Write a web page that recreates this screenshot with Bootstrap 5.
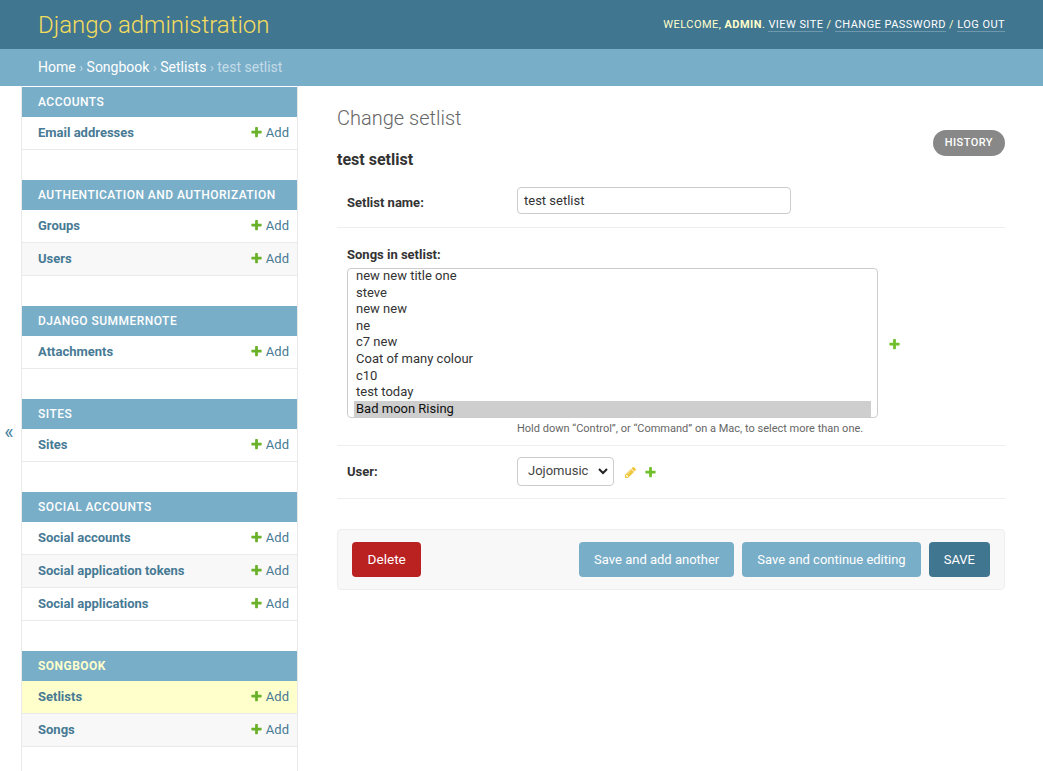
<!DOCTYPE html>
<html lang="en">
<head>
    <meta charset="UTF-8">
    <meta name="viewport" content="width=device-width, initial-scale=1.0">
    <title>Change setlist | Django site admin</title>
    <link href="https://cdn.jsdelivr.net/npm/bootstrap@5.3.0/dist/css/bootstrap.min.css" rel="stylesheet">
    <style>
        html, body {
            height: 100%;
            overflow: hidden;
        }
        body {
            font-family: Roboto, "Liberation Sans", sans-serif;
            font-size: 13px;
            color: #333;
            background: #fff;
        }
        a {
            text-decoration: none;
        }
        .site-header {
            height: 49px;
            padding: 2px 38px 0;
            background: #417690;
            color: #ffc;
        }
        .site-title {
            margin: 0;
            font-size: 24px;
            font-weight: 300;
            color: #f5dd5d;
        }
        .user-tools {
            font-size: 11px;
            letter-spacing: .45px;
            text-transform: uppercase;
        }
        .user-tools strong {
            font-weight: 700;
        }
        .user-tools a {
            color: #fff;
            border-bottom: 1px solid rgba(255, 255, 255, .25);
        }
        .crumbs {
            height: 37px;
            padding: 0 38px;
            background: #79aec8;
            color: #c4dce8;
            font-size: 14px;
        }
        .crumbs a {
            color: #fff;
        }
        .crumbs .sep {
            font-size: 13px;
        }
        .page-body {
            height: 685px;
        }
        .side-toggle {
            width: 22px;
            flex: none;
            padding-top: 7px;
            padding-right: 3px;
            font-size: 20px;
            color: #447e9b;
            border-right: 1px solid #eaeaea;
        }
        .side-nav {
            width: 276px;
            flex: none;
            padding-top: 1px;
            border-right: 1px solid #eaeaea;
        }
        .app-group {
            margin-bottom: 30px;
        }
        .app-caption {
            height: 30px;
            padding: 0 16px;
            background: #79aec8;
            color: #fff;
            font-size: 12px;
            font-weight: 500;
            letter-spacing: .46px;
            text-transform: uppercase;
        }
        .app-caption.is-current {
            color: #ffc;
            font-weight: 700;
        }
        .model-row {
            height: 33px;
            padding: 0 8px 0 16px;
            border-bottom: 1px solid #eaeaea;
        }
        .model-row:nth-child(even) {
            background: #f8f8f8;
        }
        .model-row.is-current {
            background: #ffc;
        }
        .model-name {
            color: #477a94;
            font-weight: 700;
        }
        .add-link {
            color: #477a94;
        }
        .plus-icon {
            width: 13px;
            height: 13px;
            fill: #6ab12a;
            vertical-align: -2px;
        }
        .form-plus {
            fill: #70bf2b;
        }
        .pencil-icon {
            width: 13px;
            height: 13px;
            fill: #efc63c;
        }
        .main-col {
            padding: 20px 38px 0 39px;
            min-width: 0;
        }
        .page-title {
            margin: 0;
            font-size: 20px;
            font-weight: 300;
            color: #666;
            line-height: 24px;
        }
        .object-name {
            margin: 20px 0 0;
            font-size: 16px;
            font-weight: 700;
            color: #333;
            line-height: 20px;
        }
        .history-btn {
            position: absolute;
            top: 44px;
            right: 38px;
            height: 26px;
            padding: 0 12px;
            border-radius: 15px;
            background: #888;
            color: #fff;
            font-size: 11px;
            font-weight: 500;
            letter-spacing: .45px;
            line-height: 26px;
            text-transform: uppercase;
        }
        .form-line {
            padding: 0 0 0 10px;
            border-bottom: 1px solid #eee;
        }
        .line-name {
            height: 54px;
            margin-top: 4px;
        }
        .field-label {
            width: 170px;
            flex: none;
            font-weight: 700;
            margin: 0;
        }
        .line-name .field-label {
            padding-top: 4px;
        }
        .songs-label.field-label {
            display: block;
            margin-bottom: 3px;
        }
        .name-input.form-control {
            width: 274px;
            height: 27px;
            padding: 2px 6px;
            font-size: 13px;
            color: #333;
            border: 1px solid #ccc;
            border-radius: 4px;
        }
        .line-songs {
            height: 218px;
            padding-top: 17px;
        }
        .songs-list {
            width: 531px;
            height: 150px;
            padding: 6px 6px 0;
            overflow: hidden;
            font-family: inherit;
            font-size: 13px;
            color: #333;
            border: 1px solid #ccc;
            border-radius: 4px;
            outline: 0;
        }
        .songs-list option {
            height: 16.6px;
            min-height: 16.6px;
            padding: 0 2px;
            line-height: 16.6px;
        }
        .songs-list option:checked {
            background: #cecece linear-gradient(#cecece, #cecece);
        }
        .songs-add {
            margin: 4px 0 0 10px;
        }
        .help-note {
            margin: 3px 0 0 170px;
            font-size: 11px;
            color: #666;
        }
        .line-user {
            height: 53px;
        }
        .user-select.form-select {
            width: 97px;
            height: 29px;
            margin-bottom: 2px;
            padding: 0 0 0 10px;
            font-size: 13px;
            color: #444;
            border: 1px solid #ccc;
            border-radius: 4px;
            background-image: url("data:image/svg+xml,%3csvg xmlns='http://www.w3.org/2000/svg' viewBox='0 0 10 8'%3e%3cpath fill='none' stroke='%23222' stroke-width='2' d='M1 2l4 4 4-4'/%3e%3c/svg%3e");
            background-size: 10px 8px;
            background-position: right 5px center;
        }
        .pencil-link {
            margin-left: 10px;
        }
        .plus-link {
            margin-left: 7px;
        }
        .submit-bar {
            height: 61px;
            margin-top: 30px;
            padding: 0 14px;
            background: #f8f8f8;
            border: 1px solid #eee;
            border-radius: 4px;
        }
        .submit-bar .btn {
            height: 35px;
            padding: 0 15px;
            border: 0;
            border-radius: 4px;
            font-size: 13px;
            line-height: 35px;
            color: #fff;
        }
        .submit-bar .btn-delete {
            padding: 0 15.5px;
            background: #ba2121;
            font-size: 13.6px;
        }
        .btn-soft {
            background: #79aec8;
        }
        .btn-main {
            background: #417690;
        }
    </style>
</head>
<body>
    <header class="site-header d-flex align-items-center justify-content-between">
        <h1 class="site-title">Django administration</h1>
        <div class="user-tools">
            Welcome, <strong>admin</strong>.
            <a href="#">View site</a> /
            <a href="#">Change password</a> /
            <a href="#">Log out</a>
        </div>
    </header>
    <nav class="crumbs d-flex align-items-center">
        <span><a href="#">Home</a> <span class="sep">›</span> <a href="#">Songbook</a> <span class="sep">›</span> <a href="#">Setlists</a> <span class="sep">›</span> test setlist</span>
    </nav>

    <div class="page-body d-flex position-relative">
        <div class="side-toggle d-flex align-items-center justify-content-center">«</div>
        <aside class="side-nav" id="sideNav"></aside>

        <main class="main-col flex-grow-1">
            <h2 class="page-title">Change setlist</h2>
            <a class="history-btn" href="#">History</a>
            <h3 class="object-name">test setlist</h3>

            <div class="form-line line-name d-flex align-items-center">
                <label class="field-label" for="setlistName">Setlist name:</label>
                <input class="name-input form-control" id="setlistName" type="text" value="test setlist">
            </div>

            <div class="form-line line-songs">
                <label class="field-label songs-label" for="songsList">Songs in setlist:</label>
                <div class="d-flex align-items-center">
                    <select class="songs-list" id="songsList" multiple>
                        <option>first title</option>
                        <option>new new title one</option>
                        <option>steve</option>
                        <option>new new</option>
                        <option>ne</option>
                        <option>c7 new</option>
                        <option>Coat of many colour</option>
                        <option>c10</option>
                        <option>test today</option>
                        <option selected>Bad moon Rising</option>
                    </select>
                    <a class="songs-add d-flex" href="#"><svg class="plus-icon form-plus" viewBox="0 0 1792 1792"><path d="M1600 736v192q0 40-28 68t-68 28h-416v416q0 40-28 68t-68 28h-192q-40 0-68-28t-28-68v-416h-416q-40 0-68-28t-28-68v-192q0-40 28-68t68-28h416v-416q0-40 28-68t68-28h192q40 0 68 28t28 68v416h416q40 0 68 28t28 68z"/></svg></a>
                </div>
                <p class="help-note">Hold down “Control”, or “Command” on a Mac, to select more than one.</p>
            </div>

            <div class="form-line line-user d-flex align-items-center">
                <label class="field-label" for="userSelect">User:</label>
                <select class="user-select form-select" id="userSelect"><option>Jojomusic</option></select>
                <a class="pencil-link d-flex" href="#"><svg class="pencil-icon" viewBox="0 0 1792 1792"><path d="M491 1536l91-91-235-235-91 91v107h128v128h107zm523-928q0-22-22-22-10 0-17 7l-542 542q-7 7-7 17 0 22 22 22 10 0 17-7l542-542q7-7 7-17zm-54-192l416 416-832 832h-416v-416zm683 96q0 53-37 90l-166 166-416-416 166-165q36-38 90-38 53 0 91 38l235 234q37 39 37 91z"/></svg></a>
                <a class="plus-link d-flex" href="#"><svg class="plus-icon form-plus" viewBox="0 0 1792 1792"><path d="M1600 736v192q0 40-28 68t-68 28h-416v416q0 40-28 68t-68 28h-192q-40 0-68-28t-28-68v-416h-416q-40 0-68-28t-28-68v-192q0-40 28-68t68-28h416v-416q0-40 28-68t68-28h192q40 0 68 28t28 68v416h416q40 0 68 28t28 68z"/></svg></a>
            </div>

            <div class="submit-bar d-flex align-items-center gap-2">
                <a class="btn btn-delete me-auto" href="#">Delete</a>
                <button class="btn btn-soft" type="button">Save and add another</button>
                <button class="btn btn-soft" type="button">Save and continue editing</button>
                <button class="btn btn-main" type="button">SAVE</button>
            </div>
        </main>
    </div>

    <script src="https://cdn.jsdelivr.net/npm/bootstrap@5.3.0/dist/js/bootstrap.bundle.min.js"></script>
    <script>
        const plus = '<svg class="plus-icon" viewBox="0 0 1792 1792"><path d="M1600 736v192q0 40-28 68t-68 28h-416v416q0 40-28 68t-68 28h-192q-40 0-68-28t-28-68v-416h-416q-40 0-68-28t-28-68v-192q0-40 28-68t68-28h416v-416q0-40 28-68t68-28h192q40 0 68 28t28 68v416h416q40 0 68 28t28 68z"/></svg>';
        const groups = [
            ['Accounts', ['Email addresses']],
            ['Authentication and Authorization', ['Groups', 'Users']],
            ['Django Summernote', ['Attachments']],
            ['Sites', ['Sites']],
            ['Social Accounts', ['Social accounts', 'Social application tokens', 'Social applications']],
            ['Songbook', ['Setlists', 'Songs']]
        ];

        // sidebar is just data, build it here
        document.getElementById('sideNav').innerHTML = groups.map(([name, models]) => {
            const current = name === 'Songbook';
            const rows = models.map(m => `
                <div class="model-row d-flex align-items-center justify-content-between${m === 'Setlists' ? ' is-current' : ''}">
                    <a class="model-name" href="#">${m}</a>
                    <a class="add-link" href="#">${plus} Add</a>
                </div>`).join('');
            return `<div class="app-group">
                <div class="app-caption d-flex align-items-center${current ? ' is-current' : ''}">${name}</div>
                <div>${rows}</div>
            </div>`;
        }).join('');

        document.getElementById('songsList').scrollTop = 23;
    </script>
</body>
</html>
